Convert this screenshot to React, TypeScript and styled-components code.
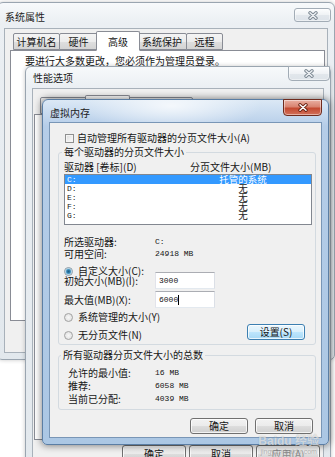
import styled, { createGlobalStyle } from 'styled-components';

const GlobalStyle = createGlobalStyle`
  html, body {
    margin: 0;
    padding: 0;
    background: #fff;
  }
  body {
    font-family: 'Noto Sans CJK SC', 'Liberation Sans', sans-serif;
    font-size: 10px;
    line-height: 10px;
    color: #161616;
  }
`;

const mono = `'Liberation Mono', 'DejaVu Sans Mono', monospace`;

type WinProps = { $x: number; $y: number; $w: number; $h: number; $active?: boolean };
type CloseProps = { $active?: boolean; $w: number; $h: number; $mt: number; $mr: number; $flush?: boolean };
type TabInfo = { label: string; w: number; selected?: boolean };

const outerTabs: TabInfo[] = [
  { label: '计算机名', w: 46 },
  { label: '硬件', w: 38 },
  { label: '高级', w: 40, selected: true },
  { label: '系统保护', w: 49 },
  { label: '远程', w: 36 },
];

const perfTabs: TabInfo[] = [
  { label: '视觉效果', w: 46 },
  { label: '高级', w: 41, selected: true },
  { label: '数据执行保护', w: 65 },
];

const drives = [
  { letter: 'C:', size: '托管的系统', selected: true },
  { letter: 'D:', size: '无' },
  { letter: 'E:', size: '无' },
  { letter: 'F:', size: '无' },
  { letter: 'G:', size: '无' },
];

const CloseGlyph = ({ active }: { active?: boolean }) => (
  <svg width="10" height="9" viewBox="0 0 10 9">
    <path
      d="M2 1.8 L8 7.2 M8 1.8 L2 7.2"
      stroke={active ? '#6b2314' : '#7b8792'}
      strokeWidth="3.4"
      strokeLinecap="round"
      fill="none"
    />
    <path
      d="M2 1.8 L8 7.2 M8 1.8 L2 7.2"
      stroke={active ? '#ffffff' : '#eef1f4'}
      strokeWidth="1.5"
      strokeLinecap="round"
      fill="none"
    />
  </svg>
);

const TabRow = ({ tabs }: { tabs: TabInfo[] }) => (
  <>
    {tabs.map((t) => (
      <Tab key={t.label} $w={t.w} $selected={t.selected}>
        {t.label}
      </Tab>
    ))}
  </>
);

export default function App() {
  return (
    <>
      <GlobalStyle />
      <Desktop>
        {/* 系统属性 */}
        <Win $x={-3} $y={2} $w={338} $h={358}>
          <TitleBar $h={25}>
            <Title $top={9}>系统属性</Title>
            <CloseButton $w={37} $h={14} $mt={5} $mr={-3}>
              <CloseGlyph />
            </CloseButton>
          </TitleBar>
          <Client>
            <TabStrip $h={21} $left={8}>
              <TabRow tabs={outerTabs} />
            </TabStrip>
            <TabPanel $ml={5} $mr={2} $h={271}>
              <PanelNote>要进行大多数更改，您必须作为管理员登录。</PanelNote>
            </TabPanel>
          </Client>
        </Win>

        {/* 性能选项 */}
        <Win $x={25} $y={66} $w={306} $h={410}>
          <TitleBar $h={21}>
            <Title $top={6}>性能选项</Title>
            <CloseButton $w={42} $h={15} $mt={-1} $mr={-6} $flush>
              <CloseGlyph />
            </CloseButton>
          </TitleBar>
          <Client>
            <TabStrip $h={25} $left={7}>
              <TabRow tabs={perfTabs} />
            </TabStrip>
            <TabPanel $ml={1} $mr={1} $h={326} />
            <DialogButtons $mt={5} $pr={3} $gap={3}>
              <PushButton $w={64} $h={17}>确定</PushButton>
              <PushButton $w={64} $h={17}>取消</PushButton>
              <PushButton $w={64} $h={17} $disabled>应用(A)</PushButton>
            </DialogButtons>
          </Client>
        </Win>

        {/* 虚拟内存 */}
        <Win $x={42} $y={99} $w={287} $h={346} $active>
          <TitleBar $h={22}>
            <Title $top={8}>虚拟内存</Title>
            <CloseButton $active $w={39} $h={17} $mt={-1} $mr={0} $flush>
              <CloseGlyph active />
            </CloseButton>
          </TitleBar>
          <Client $active>
            <VmBody>
              <CheckRow>
                <CheckBox />
                <span>自动管理所有驱动器的分页文件大小(A)</span>
              </CheckRow>

              <Group $mt={4} $pad="5px 3px 4px 5px">
                <GroupTitle $ml={-2}>每个驱动器的分页文件大小</GroupTitle>
                <DriveHeader>
                  <span>驱动器 [卷标](D)</span>
                  <span>分页文件大小(MB)</span>
                </DriveHeader>
                <DriveList>
                  {drives.map((d) => (
                    <DriveRow key={d.letter} $selected={d.selected}>
                      <DriveLetter>{d.letter}</DriveLetter>
                      <DriveSize>{d.size}</DriveSize>
                    </DriveRow>
                  ))}
                </DriveList>

                <InfoGrid $mt={12} $gap={2} $col={91}>
                  <span>所选驱动器:</span>
                  <Value>C:</Value>
                  <span>可用空间:</span>
                  <Value>24918 MB</Value>
                </InfoGrid>

                <RadioRow $mt={7}>
                  <RadioDot $checked />
                  <span>自定义大小(C):</span>
                </RadioRow>
                <EditRow $mt={-4}>
                  <span>初始大小(MB)(I):</span>
                  <Edit>3000</Edit>
                </EditRow>
                <EditRow $mt={2}>
                  <span>最大值(MB)(X):</span>
                  <Edit>
                    6000
                    <Caret />
                  </Edit>
                </EditRow>
                <RadioRow $mt={4}>
                  <RadioDot />
                  <span>系统管理的大小(Y)</span>
                </RadioRow>
                <LastRow>
                  <RadioRow $mt={0}>
                    <RadioDot />
                    <span>无分页文件(N)</span>
                  </RadioRow>
                  <PushButton $w={58} $h={16} $focused>
                    设置(S)
                  </PushButton>
                </LastRow>
              </Group>

              <Group $mt={5} $pad="8px 3px 5px 9px">
                <GroupTitle $ml={-7}>所有驱动器分页文件大小的总数</GroupTitle>
                <InfoGrid $mt={0} $gap={3} $col={87}>
                  <span>允许的最小值:</span>
                  <Value>16 MB</Value>
                  <span>推荐:</span>
                  <Value>6058 MB</Value>
                  <span>当前已分配:</span>
                  <Value>4039 MB</Value>
                </InfoGrid>
              </Group>

              <DialogButtons $mt={8} $pr={8} $gap={7}>
                <PushButton $w={58} $h={16}>确定</PushButton>
                <PushButton $w={58} $h={16}>取消</PushButton>
              </DialogButtons>
            </VmBody>
          </Client>
        </Win>

        <Watermark>
          <WatermarkBrand>Baidu 经验</WatermarkBrand>
          <WatermarkUrl>jingyan.baidu.com</WatermarkUrl>
        </Watermark>
      </Desktop>
    </>
  );
}

const Desktop = styled.div`
  position: relative;
  width: 335px;
  height: 457px;
  overflow: hidden;
  background: #fff;
`;

// windows sit on a free desktop, so they are placed by coordinates
const Win = styled.div<WinProps>`
  position: absolute;
  z-index: 0;
  left: ${(p) => p.$x}px;
  top: ${(p) => p.$y}px;
  width: ${(p) => p.$w}px;
  height: ${(p) => p.$h}px;
  box-sizing: border-box;
  display: flex;
  flex-direction: column;
  padding: 0 6px 6px;
  border: 1px solid ${(p) => (p.$active ? '#5b7ea4' : '#9aa5b0')};
  border-radius: 6px 6px 5px 5px;
  background: ${(p) =>
    p.$active
      ? 'radial-gradient(ellipse 90px 26px at 45% 6px, rgba(255,255,255,0.75), rgba(255,255,255,0) 100%), linear-gradient(180deg, #dbe8f5 0px, #c4d8ee 16px, #b5cde8 26px, #abc7e4 100%)'
      : 'linear-gradient(180deg, #f7f9fb 0px, #ebeff3 20px, #e2e8ed 100%)'};
  box-shadow: ${(p) =>
    p.$active ? '0 0 7px 1px rgba(0, 0, 0, 0.45)' : '0 0 4px rgba(0, 0, 0, 0.22)'};
`;

const TitleBar = styled.div<{ $h: number }>`
  flex: none;
  height: ${(p) => p.$h}px;
  display: flex;
  justify-content: space-between;
  align-items: flex-start;
`;

const Title = styled.div<{ $top: number }>`
  padding: ${(p) => p.$top}px 0 0 1px;
  font-size: 10px;
  line-height: 10px;
  color: #1c1c1c;
`;

const CloseButton = styled.div<CloseProps>`
  flex: none;
  box-sizing: border-box;
  width: ${(p) => p.$w}px;
  height: ${(p) => p.$h}px;
  margin-top: ${(p) => p.$mt}px;
  margin-right: ${(p) => p.$mr}px;
  display: flex;
  align-items: center;
  justify-content: center;
  border: 1px solid ${(p) => (p.$active ? '#6f2b1d' : '#a2acb6')};
  border-radius: ${(p) => (p.$flush ? '0 0 4px 4px' : '3px')};
  background: ${(p) =>
    p.$active
      ? 'linear-gradient(180deg, #eab0a2 0%, #d98471 45%, #c44a31 55%, #d2715a 100%)'
      : 'linear-gradient(180deg, #fcfdfe 0%, #eff2f5 50%, #e2e7ec 51%, #dde3e9 100%)'};
  box-shadow: inset 0 0 0 1px rgba(255, 255, 255, 0.45);
`;

const Client = styled.div<{ $active?: boolean }>`
  flex: 1;
  min-height: 0;
  display: flex;
  flex-direction: column;
  background: #f0f0f0;
  border: 1px solid ${(p) => (p.$active ? '#7996b6' : '#a8b1ba')};
`;

const TabStrip = styled.div<{ $h: number; $left: number }>`
  flex: none;
  height: ${(p) => p.$h}px;
  display: flex;
  align-items: flex-end;
  padding-left: ${(p) => p.$left}px;
`;

const Tab = styled.div<{ $w: number; $selected?: boolean }>`
  position: relative;
  z-index: ${(p) => (p.$selected ? 2 : 1)};
  box-sizing: border-box;
  width: ${(p) => p.$w + (p.$selected ? 4 : 1)}px;
  height: ${(p) => (p.$selected ? 20 : 17)}px;
  margin: 0 ${(p) => (p.$selected ? -2 : 0)}px ${(p) => (p.$selected ? -1 : 0)}px
    ${(p) => (p.$selected ? -2 : -1)}px;
  padding-top: ${(p) => (p.$selected ? 5 : 3)}px;
  border: 1px solid #898c95;
  border-bottom-color: ${(p) => (p.$selected ? '#fff' : '#898c95')};
  border-radius: 2px 2px 0 0;
  background: ${(p) =>
    p.$selected
      ? '#fff'
      : 'linear-gradient(180deg, #f4f4f4 0%, #ececec 50%, #dfdfdf 51%, #d4d4d4 100%)'};
  text-align: center;
  white-space: nowrap;
  font-size: 10px;
  line-height: 10px;

  &:first-child {
    margin-left: 0;
  }
`;

const TabPanel = styled.div<{ $ml: number; $mr: number; $h: number }>`
  flex: none;
  box-sizing: border-box;
  height: ${(p) => p.$h}px;
  margin: 0 ${(p) => p.$mr}px 0 ${(p) => p.$ml}px;
  border: 1px solid #898c95;
  background: #fff;
`;

const PanelNote = styled.div`
  padding: 5px 0 0 14px;
  white-space: nowrap;
`;

const DialogButtons = styled.div<{ $mt: number; $pr: number; $gap: number }>`
  flex: none;
  display: flex;
  justify-content: flex-end;
  gap: ${(p) => p.$gap}px;
  margin-top: ${(p) => p.$mt}px;
  padding-right: ${(p) => p.$pr}px;
`;

const PushButton = styled.div<{ $w: number; $h: number; $focused?: boolean; $disabled?: boolean }>`
  box-sizing: border-box;
  width: ${(p) => p.$w}px;
  height: ${(p) => p.$h}px;
  display: flex;
  align-items: center;
  justify-content: center;
  border: 1px solid ${(p) => (p.$focused ? '#3c7fb1' : '#707070')};
  border-radius: 3px;
  background: ${(p) =>
    p.$focused
      ? 'linear-gradient(180deg, #eaf6fd 0%, #d9f0fc 50%, #bee6fd 51%, #a7d9f5 100%)'
      : 'linear-gradient(180deg, #f2f2f2 0%, #ebebeb 50%, #dddddd 51%, #cfcfcf 100%)'};
  box-shadow: inset 0 0 0 1px rgba(255, 255, 255, 0.75);
  color: ${(p) => (p.$disabled ? '#8d8d8d' : '#151515')};
  font-size: 10px;
  line-height: 10px;
  white-space: nowrap;
`;

const VmBody = styled.div`
  display: flex;
  flex-direction: column;
  padding: 10px 0 0 8px;
`;

const CheckRow = styled.div`
  display: flex;
  align-items: center;
  gap: 3px;
  height: 10px;
  margin-left: 7px;
  white-space: nowrap;
`;

const CheckBox = styled.span`
  flex: none;
  box-sizing: border-box;
  width: 9px;
  height: 9px;
  border: 1px solid #8e8f8f;
  background: linear-gradient(135deg, #dadada 0%, #f0f0f0 60%, #fbfbfb 100%);
  box-shadow: inset 0 0 0 1px #f4f4f4;
`;

const Group = styled.fieldset<{ $mt: number; $pad: string }>`
  box-sizing: border-box;
  width: 258px;
  min-width: 0;
  margin: ${(p) => p.$mt}px 0 0;
  padding: ${(p) => p.$pad};
  border: 1px solid #d3dae0;
  border-radius: 3px;
`;

const GroupTitle = styled.legend<{ $ml: number }>`
  margin-left: ${(p) => p.$ml}px;
  padding: 0 2px;
  font-size: 10px;
  line-height: 10px;
  white-space: nowrap;
`;

const DriveHeader = styled.div`
  display: grid;
  grid-template-columns: 126px 1fr;
  height: 10px;
  white-space: nowrap;
`;

const DriveList = styled.div`
  box-sizing: border-box;
  height: 51px;
  margin-top: 2px;
  border: 1px solid #828790;
  background: #fff;
  display: flex;
  flex-direction: column;
`;

const DriveRow = styled.div<{ $selected?: boolean }>`
  display: grid;
  grid-template-columns: 124px 104px;
  height: 9px;
  line-height: 9px;
  padding-left: 2px;
  background: ${(p) => (p.$selected ? '#3399ff' : 'transparent')};
  color: ${(p) => (p.$selected ? '#fff' : '#161616')};
`;

const DriveLetter = styled.span`
  font-family: ${mono};
  font-size: 8px;
`;

const DriveSize = styled.span`
  text-align: center;
  font-size: 9.5px;
`;

const InfoGrid = styled.div<{ $mt: number; $gap: number; $col: number }>`
  display: grid;
  grid-template-columns: ${(p) => p.$col}px auto;
  row-gap: ${(p) => p.$gap}px;
  margin-top: ${(p) => p.$mt}px;
  line-height: 10px;
  white-space: nowrap;
`;

const Value = styled.span`
  font-family: ${mono};
  font-size: 8px;
  line-height: 10px;
`;

const RadioRow = styled.div<{ $mt: number }>`
  display: flex;
  align-items: center;
  gap: 5px;
  height: 10px;
  margin-top: ${(p) => p.$mt}px;
  white-space: nowrap;
`;

const RadioDot = styled.span<{ $checked?: boolean }>`
  flex: none;
  box-sizing: border-box;
  width: 9px;
  height: 9px;
  border-radius: 50%;
  border: 1px solid ${(p) => (p.$checked ? '#8a9aa6' : '#a2a2a2')};
  background: ${(p) =>
    p.$checked
      ? 'radial-gradient(circle, #1f5f86 0, #2f7fae 1.6px, #8cc4e2 2.8px, #eef5f9 3.4px)'
      : 'radial-gradient(circle, #f7f7f7 0, #e4e4e4 3.5px)'};
`;

const EditRow = styled.div<{ $mt: number }>`
  display: grid;
  grid-template-columns: 91px 60px;
  align-items: center;
  height: 17px;
  margin-top: ${(p) => p.$mt}px;
  white-space: nowrap;
`;

const Edit = styled.div`
  box-sizing: border-box;
  height: 17px;
  display: flex;
  align-items: center;
  padding-left: 3px;
  border: 1px solid;
  border-color: #abadb3 #dbdfe6 #e3e9ef #e2e3ea;
  background: #fff;
  font-family: ${mono};
  font-size: 8px;
`;

const Caret = styled.span`
  width: 1px;
  height: 10px;
  background: #000;
`;

const LastRow = styled.div`
  display: flex;
  justify-content: space-between;
  align-items: flex-end;
  margin-top: 2px;
  padding-right: 7px;
`;

const Watermark = styled.div`
  position: absolute;
  z-index: 5;
  right: 16px;
  bottom: 1px;
  display: flex;
  flex-direction: column;
  align-items: center;
  pointer-events: none;
`;

const WatermarkBrand = styled.span`
  font-family: 'Liberation Sans', 'Noto Sans CJK SC', sans-serif;
  font-size: 12px;
  line-height: 13px;
  font-weight: bold;
  color: rgba(255, 255, 255, 0.6);
  text-shadow: 0 0 1px rgba(80, 80, 80, 0.4);
`;

const WatermarkUrl = styled.span`
  font-family: 'Liberation Sans', sans-serif;
  font-size: 7px;
  line-height: 8px;
  color: rgba(120, 120, 120, 0.5);
`;
